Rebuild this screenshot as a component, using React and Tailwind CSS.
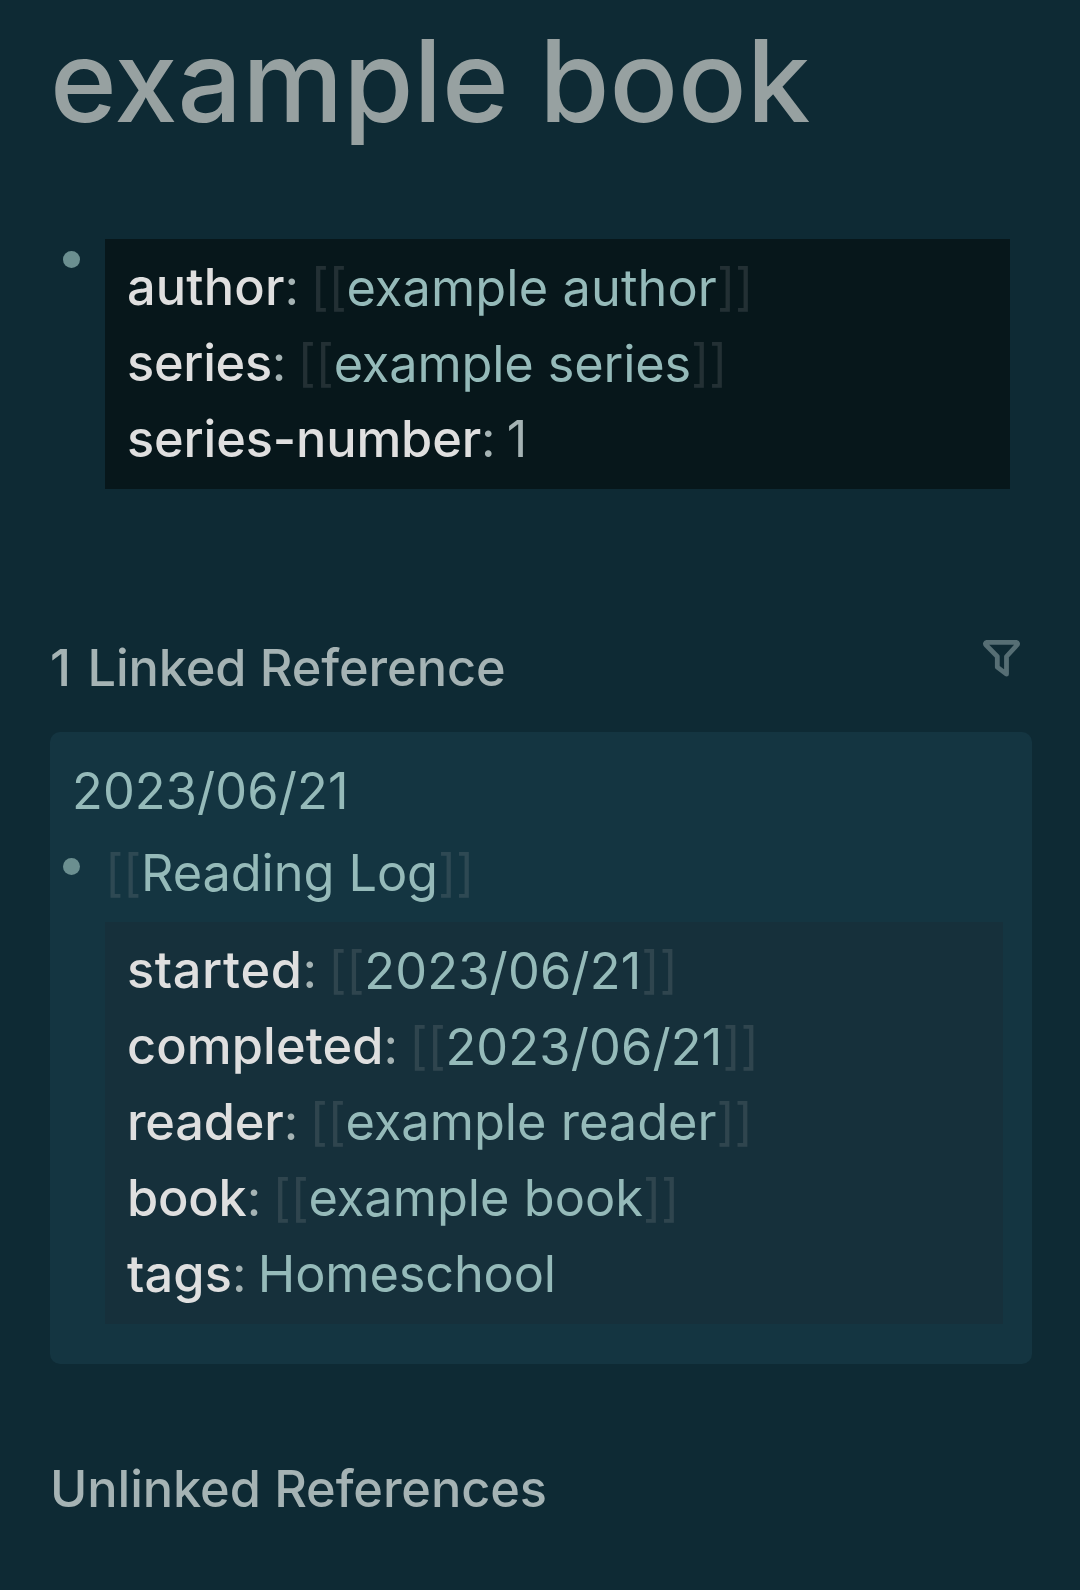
const linkedProperties = [
    { key: "started", value: "2023/06/21", brackets: true, keyClass: "tracking-[0.6px]", valueClass: "tracking-[0.15px] align-[-1px]" },
    { key: "completed", value: "2023/06/21", brackets: true, keyClass: "tracking-[0.1px]", valueClass: "tracking-[0.15px] align-[-1px]" },
    { key: "reader", value: "example reader", brackets: true, keyClass: "tracking-[-0.2px]" },
    { key: "book", value: "example book", brackets: true, keyClass: "tracking-[-0.2px]" },
    { key: "tags", value: "Homeschool", link: true, keyClass: "tracking-[0.1px]", valueClass: "tracking-[-0.15px]" }
];

const pageProperties = [
    { key: "author", value: "example author", brackets: true, keyClass: "tracking-[0.15px]", valueClass: "tracking-[0.1px] align-[-1px]" },
    { key: "series", value: "example series", brackets: true, keyClass: "tracking-[-0.3px]", valueClass: "tracking-[-0.15px] align-[-1px]" },
    { key: "series-number", value: "1", keyClass: "tracking-[-0.15px]" }
];

const PageRef = ({ children, className = "" }) => (
    <span>
        <span className="text-[#a0a2a4]/19 tracking-[-0.4px]">[[</span>
        <span className={`text-[#95bab9] ${className}`}>{children}</span>
        <span className="text-[#a0a2a4]/19 tracking-[-0.4px]">]]</span>
    </span>
);

const Property = ({ item }) => (
    <div className="h-[76px] leading-[76px] whitespace-pre">
        <span className={`font-medium text-[#dfdfdf] ${item.keyClass || ""}`}>{item.key}</span>
        <span className="[word-spacing:-3px]">: </span>
        {item.brackets ? (
            <PageRef className={item.valueClass}>{item.value}</PageRef>
        ) : (
            <span className={`${item.link ? "text-[#95bab9]" : ""} ${item.valueClass || ""}`}>{item.value}</span>
        )}
    </div>
);

const Bullet = () => <span className="block w-[17px] h-[17px] rounded-full bg-[#6b8f90]" />;

const App = () => {
    return (
        <div className="w-[1080px] h-[1590px] overflow-hidden bg-[#0e2a34] text-[#a5b3b4] font-['Inter',sans-serif] text-[50.5px]">
            <h1 className="pl-[50px] pt-[6px] h-[239px] text-[113.7px] leading-[150px] font-medium text-[#97a1a1]">
                example book
            </h1>

            {/* Page properties */}
            <div className="flex pl-[63px]">
                <div className="w-[42px] pt-[12px]">
                    <Bullet />
                </div>
                <div className="w-[905px] h-[250px] bg-[#07171b] pl-[22px] pt-[10px]">
                    {pageProperties.map((item) => (
                        <Property key={item.key} item={item} />
                    ))}
                </div>
            </div>

            {/* Linked references */}
            <div className="mt-[142px] h-[101px] pl-[50px] pr-[60px] flex justify-between">
                <h2 className="pt-[1px] leading-[72px] font-medium whitespace-pre">
                    <span className="[word-spacing:3px]">1 </span>
                    <span className="tracking-[-0.1px]">Linked Reference</span>
                </h2>
                <svg className="w-[38px] h-[38px] mt-[8px]" viewBox="0 0 38 38" fill="none" stroke="#566e74" strokeWidth="4.8" strokeLinejoin="round">
                    <path d="M4.800 3.400H34.200Q36.500 4 35 6L24.500 17.500V35.200L15.300 28.200V17.500L4 6Q2.500 4 4.800 3.400Z" />
                </svg>
            </div>
            <div className="ml-[50px] w-[982px] h-[632px] rounded-[10px] bg-[#143541] pt-[20px]">
                <div className="pl-[22px] h-[78px] leading-[78px] text-[#95bab9] tracking-[0.1px]">2023/06/21</div>
                <div className="flex pl-[13px] h-[92px]">
                    <div className="w-[42px] pt-[28px]">
                        <Bullet />
                    </div>
                    <div className="leading-[86px]">
                        <PageRef className="tracking-[-0.1px]">Reading Log</PageRef>
                    </div>
                </div>
                <div className="ml-[55px] w-[898px] h-[402px] bg-[#16303b] pl-[22px] pt-[10px]">
                    {linkedProperties.map((item) => (
                        <Property key={item.key} item={item} />
                    ))}
                </div>
            </div>

            <h2 className="mt-[89px] pl-[50px] leading-[72px] font-medium tracking-[-0.1px]">Unlinked References</h2>
        </div>
    );
};

export default App;
